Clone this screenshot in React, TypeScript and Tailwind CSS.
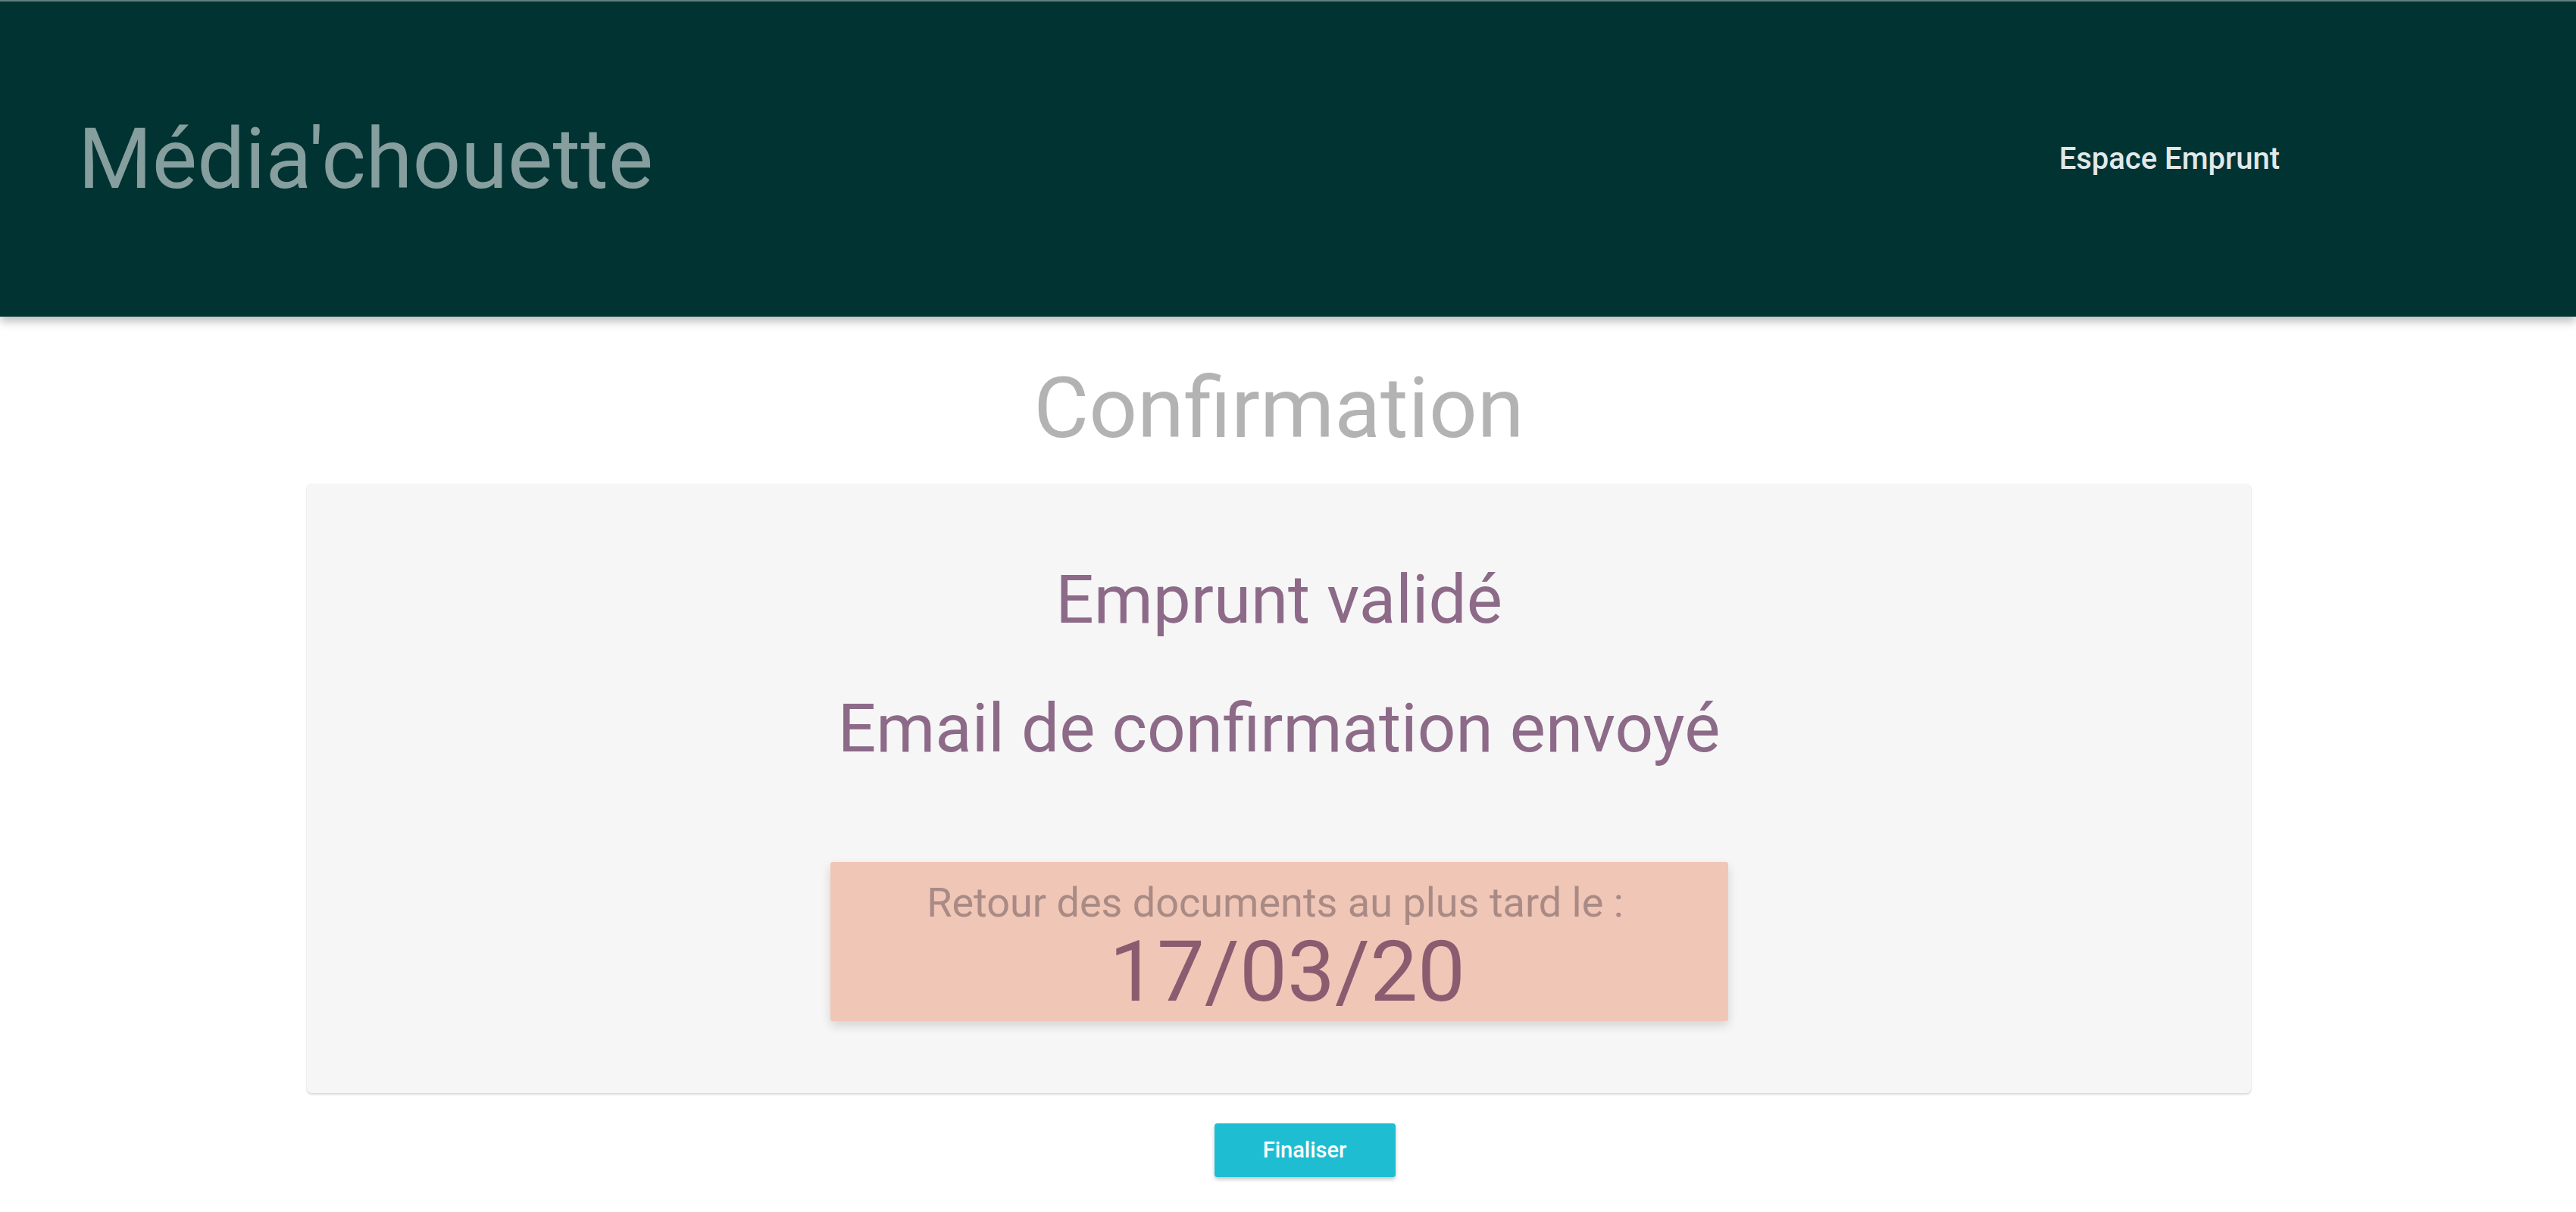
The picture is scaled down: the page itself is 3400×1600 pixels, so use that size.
import React from 'react';

const Header: React.FC = () => {
    return (
        <header className="relative z-10 h-[418px] bg-[#013333] border-t-2 border-[#5f7f7f] shadow-[0_6px_12px_rgba(0,0,0,0.28)] flex items-center justify-between pl-[103px] pr-[391px]">
            <a href="#" className="text-[112px] leading-none text-[#869e9e] font-normal">
                Média'chouette
            </a>
            <nav>
                <a href="#" className="text-[40px] leading-none font-medium text-[#e2e8e8]">
                    Espace Emprunt
                </a>
            </nav>
        </header>
    );
};

const App: React.FC = () => {
    return (
        <div className="min-h-[1600px] bg-white" style={{ fontFamily: 'Roboto, "Noto Sans", sans-serif' }}>
            <Header />

            <main className="pl-[405px] pr-[429px]">
                <h1 className="mt-[65px] text-center text-[112px] leading-none font-normal text-[#b3b3b3]">
                    Confirmation
                </h1>

                <section className="mt-[44px] h-[804px] bg-[#f6f6f6] rounded-[6px] shadow-[0_2px_3px_rgba(0,0,0,0.14),0_0_2px_rgba(0,0,0,0.08)] pt-[108px] flex flex-col items-center">
                    <h2 className="text-[89px] leading-none text-[#8c6a88] font-normal">Emprunt validé</h2>
                    <h2 className="mt-[81px] text-[89px] leading-none text-[#8c6a88] font-normal">Email de confirmation envoyé</h2>

                    <div className="mt-[132px] w-[1185px] h-[210px] bg-[#f0c6b7] rounded-[3px] shadow-[0_6px_14px_rgba(0,0,0,0.14)] pt-[27px] flex flex-col items-center">
                        <p className="mr-[10px] text-[54px] leading-none text-[#a98a84]">Retour des documents au plus tard le :</p>
                        <p className="mt-[8px] ml-[22px] text-[112px] leading-none text-[#8b5c70]">17/03/20</p>
                    </div>
                </section>

                <div className="mt-[40px] flex justify-center pl-[68px]">
                    <button type="button" className="w-[239px] h-[71px] rounded-[4px] bg-[#1fbdd2] text-white text-[29px] font-medium shadow-[0_3px_5px_rgba(0,0,0,0.22)]">
                        Finaliser
                    </button>
                </div>
            </main>
        </div>
    );
};

export default App;
